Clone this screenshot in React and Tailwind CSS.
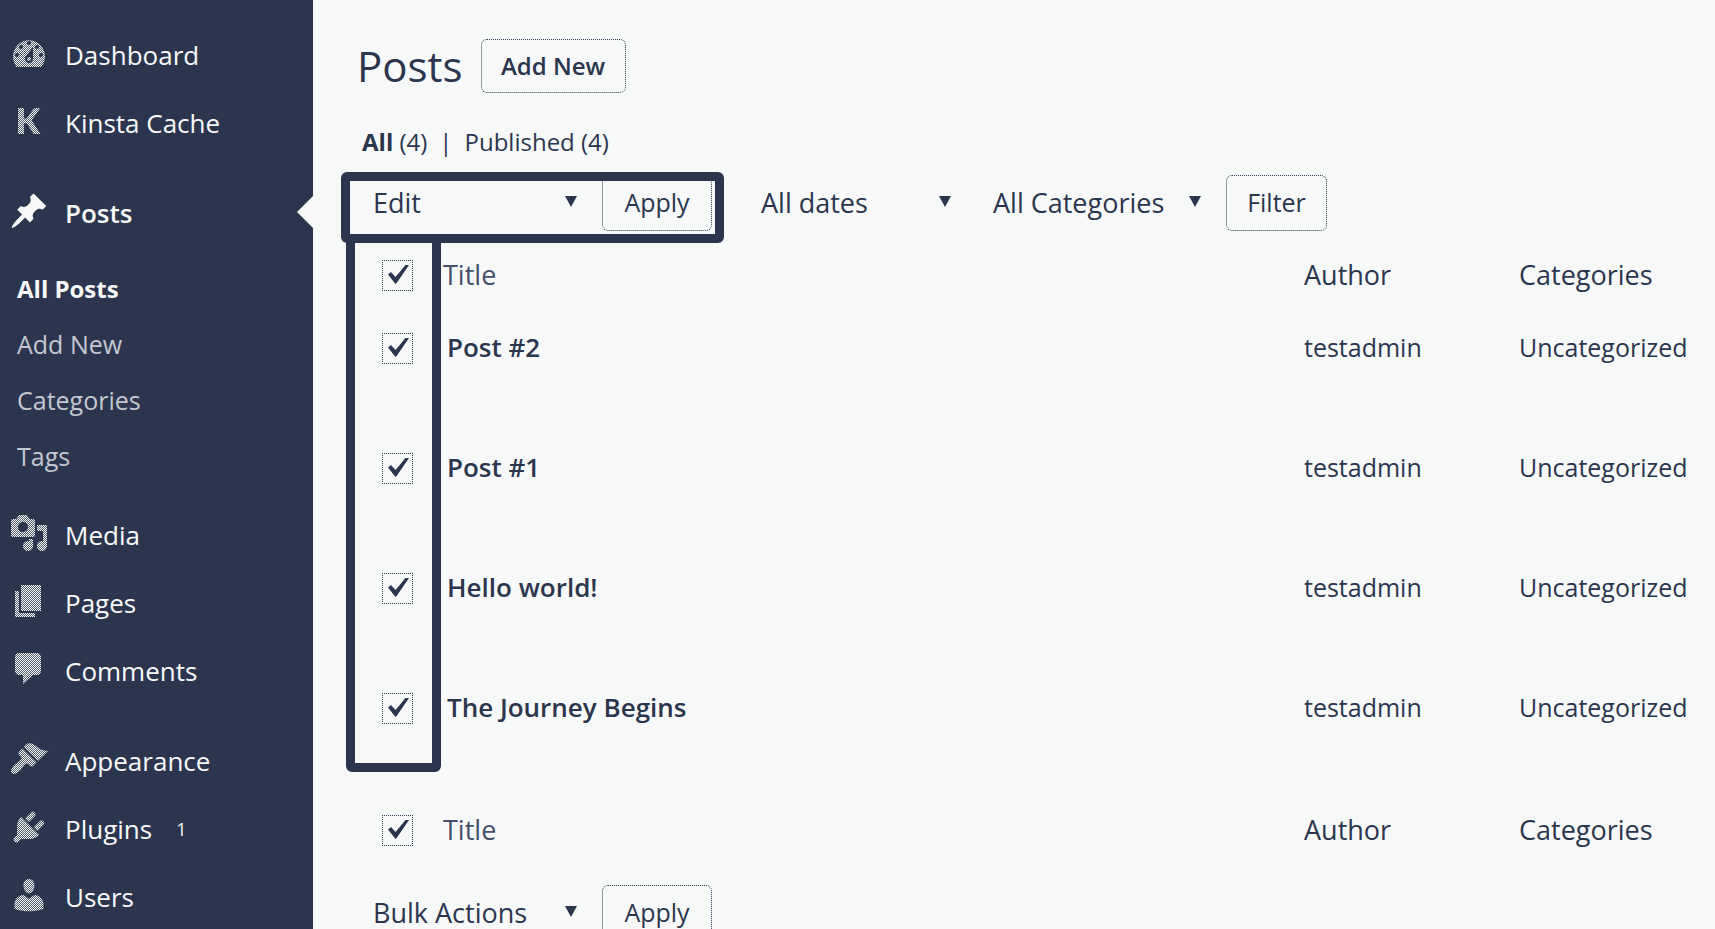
import React from "react";

const icons = {
  dashboard:
    "M3.76 17h12.48c1.11-1.45 1.76-3.25 1.76-5.21 0-4.49-3.58-8.13-8-8.13s-8 3.64-8 8.13c0 1.96.65 3.76 1.76 5.21zM10 4c.55 0 1 .45 1 1s-.45 1-1 1-1-.45-1-1 .45-1 1-1zM6 6c.55 0 1 .45 1 1s-.45 1-1 1-1-.45-1-1 .45-1 1-1zm8 0c.55 0 1 .45 1 1s-.45 1-1 1-1-.45-1-1 .45-1 1-1zm-5.37 5.55L12 7v6c0 1.1-.9 2-2 2s-2-.9-2-2c0-.57.24-1.08.63-1.45zM4 10c.55 0 1 .45 1 1s-.45 1-1 1-1-.45-1-1 .45-1 1-1zm12 0c.55 0 1 .45 1 1s-.45 1-1 1-1-.45-1-1 .45-1 1-1zm-5 3c0-.55-.45-1-1-1s-1 .45-1 1 .45 1 1 1 1-.45 1-1z",
  kinsta: "M4.5 3.5h3v5.3h1.300L12 4.300q.6-.8 1.500-.8h2.200L11.300 9.600l4.400 6.900h-3.400L9 11.200H7.500v5.300h-3z",
  posts:
    "M10.44 3.02l1.82-1.82 6.36 6.35-1.83 1.82c-1.05-.68-2.48-.57-3.41.36l-.75.75c-.92.93-1.04 2.35-.35 3.41l-1.83 1.82-2.41-2.41-2.8 2.79c-.42.42-3.38 2.71-3.8 2.29s1.86-3.39 2.28-3.81l2.79-2.79L4.1 9.36l1.83-1.82c1.05.69 2.48.57 3.4-.36l.75-.75c.93-.92 1.05-2.35.36-3.41z",
  media:
    "M13 11V4c0-.55-.45-1-1-1h-1.67L9 1H5L3.67 3H2c-.55 0-1 .45-1 1v7c0 .55.45 1 1 1h10c.55 0 1-.45 1-1zM7 4.5c1.38 0 2.5 1.12 2.5 2.5S8.38 9.5 7 9.5 4.5 8.38 4.5 7 5.62 4.5 7 4.5zM14 6h5v10.5c0 1.38-1.12 2.5-2.5 2.5S14 17.88 14 16.5s1.12-2.5 2.5-2.5c.17 0 .34.02.5.05V9h-3V6zm-4 8.05V13h2v3.5c0 1.38-1.12 2.5-2.5 2.5S7 17.88 7 16.5 8.12 14 9.5 14c.17 0 .34.02.5.05z",
  pages: "M6 15V2h10v13H6zm-1 1h8v2H3V5h2v11z",
  comments: "M5 2h9c1.1 0 2 .9 2 2v7c0 1.1-.9 2-2 2h-2l-5 4.500v-4.500H5c-1.1 0-2-.9-2-2V4c0-1.1.9-2 2-2z",
  appearance:
    "M14.48 11.06L7.41 3.99l1.5-1.5c.5-.56 2.3-.47 3.51.32 1.21.8 1.43 1.28 2.91 2.1 1.18.64 2.45 1.26 4.45.85zm-.71.71L6.7 4.7 4.93 6.47c-.39.39-.39 1.02 0 1.41l1.06 1.06c.39.39.39 1.03 0 1.42-.6.6-1.43 1.11-2.21 1.69-.35.26-.7.53-1.01.84C1.43 14.23.4 16.08 1.4 17.07c.99 1 2.84-.03 4.18-1.36.31-.31.58-.66.85-1.02.57-.78 1.08-1.61 1.69-2.21.39-.39 1.02-.39 1.41 0l1.06 1.06c.39.39 1.02.39 1.41 0z",
  plugins:
    "M13.11 4.36L9.87 7.6 8 5.73l3.24-3.24c.35-.34 1.05-.2 1.56.32.52.51.66 1.21.31 1.55zm-8 1.77l.91-1.12 9.01 9.01-1.19.84c-.71.71-2.63 1.16-3.82 1.16H6.14L4.9 17.26c-.59.59-1.54.59-2.12 0-.59-.58-.59-1.53 0-2.12l1.24-1.24v-3.88c0-1.13.4-3.19 1.09-3.89zm7.26 3.97l3.24-3.24c.34-.35 1.04-.21 1.55.31.52.51.66 1.21.31 1.55l-3.24 3.25z",
  users:
    "M10 9.25c-2.27 0-2.73-3.44-2.73-3.44C7 4.02 7.82 2 9.97 2c2.16 0 2.98 2.02 2.71 3.81 0 0-.41 3.44-2.68 3.44zm0 2.57L12.72 10c2.39 0 4.52 2.33 4.52 4.53v2.49s-3.65 1.13-7.24 1.13c-3.65 0-7.24-1.13-7.24-1.13v-2.49c0-2.25 1.94-4.48 4.47-4.48z",
};

const topItems = [
  { icon: "dashboard", label: "Dashboard" },
  { icon: "kinsta", label: "Kinsta Cache" },
];
const contentItems = [
  { icon: "media", label: "Media" },
  { icon: "pages", label: "Pages" },
  { icon: "comments", label: "Comments" },
];
const adminItems = [
  { icon: "appearance", label: "Appearance" },
  { icon: "plugins", label: "Plugins", count: 1 },
  { icon: "users", label: "Users" },
];
const posts = ["Post #2", "Post #1", "Hello world!", "The Journey Begins"];

function MenuIcon({ name, solid }) {
  const id = `weave-${name}`;
  return (
    <svg viewBox="0 0 20 20" className="-mt-1 size-10 shrink-0" aria-hidden="true">
      <defs>
        <pattern id={id} width="1" height="1" patternUnits="userSpaceOnUse">
          <rect width="1" height="1" fill="#f7f9f9" fillOpacity="0.2" />
          <path d="M0 0h.5v.5H0zM.5 .5h.5v.5H.5z" fill="#f7f9f9" shapeRendering="crispEdges" />
        </pattern>
      </defs>
      <path d={icons[name]} fillRule="evenodd" fill={solid ? "#f7f9f9" : `url(#${id})`} />
    </svg>
  );
}

function MenuItem({ icon, label, count, current }) {
  return (
    <li>
      <a href="#" className="relative flex h-17 items-center gap-4 pl-[9px] text-[26px]">
        <MenuIcon name={icon} solid={current} />
        <span className={current ? "font-semibold" : ""}>{label}</span>
        {count && <span className="ml-2 text-lg">{count}</span>}
        {current && (
          <svg viewBox="0 0 16 32" className="absolute right-0 top-[17px] h-8 w-4" aria-hidden="true">
            <path d="M16 0v32L0 16z" fill="#f7f9f9" />
          </svg>
        )}
      </a>
    </li>
  );
}

function Sidebar() {
  const sub = ["All Posts", "Add New", "Categories", "Tags"];
  return (
    <nav aria-label="Main menu" className="w-[313px] shrink-0 bg-[#2b364e] pt-[21px] text-[#f7f9f9]">
      <ul>{topItems.map((i) => <MenuItem key={i.label} {...i} />)}</ul>
      <ul className="mt-[22px]">
        <MenuItem icon="posts" label="Posts" current />
        <li>
          <ul className="pb-4 pt-[14px]">
            {sub.map((s, i) => (
              <li key={s}>
                <a
                  href="#"
                  className={
                    "flex h-14 items-center pl-[17px] " +
                    (i === 0 ? "text-2xl font-bold" : "text-[25px] text-[#c3c8d0]")
                  }
                >
                  {s}
                </a>
              </li>
            ))}
          </ul>
        </li>
        {contentItems.map((i) => <MenuItem key={i.label} {...i} />)}
      </ul>
      <ul className="mt-[22px]">{adminItems.map((i) => <MenuItem key={i.label} {...i} />)}</ul>
    </nav>
  );
}

function Select({ label, options, className }) {
  return (
    <div className={"relative " + className}>
      <select aria-label={label} className="h-14 w-full appearance-none bg-transparent text-[27px] outline-none">
        {options.map((o) => <option key={o}>{o}</option>)}
      </select>
      <svg viewBox="0 0 12 11" className="pointer-events-none absolute right-0 top-[21px] h-[11px] w-3" aria-hidden="true">
        <path d="M0 0h12L6 11z" fill="currentColor" />
      </svg>
    </div>
  );
}

function Button({ children, className = "" }) {
  return (
    <button
      type="button"
      className={"rounded-md border border-dotted border-[#2b364e] " + className}
    >
      {children}
    </button>
  );
}

function Check({ label }) {
  return (
    <label className="relative ml-[41px] block size-[31px]">
      <input
        type="checkbox"
        defaultChecked
        aria-label={label}
        className="peer block size-[31px] appearance-none border border-dotted border-[#2b364e]"
      />
      <svg
        viewBox="0 0 31 31"
        className="pointer-events-none absolute inset-0 hidden size-[31px] peer-checked:block"
        aria-hidden="true"
      >
        <path d="M6 14.500L9 12l4.500 5L23.500 5H27L15 22.500 13.500 24z" fill="currentColor" />
      </svg>
    </label>
  );
}

function HeadCells({ where }) {
  return (
    <>
      <td><Check label={`Select all (${where})`} /></td>
      <th scope="col" className="font-normal"><a href="#" className="text-[#46506a]">Title</a></th>
      <th scope="col" className="font-normal">Author</th>
      <th scope="col" className="font-normal">Categories</th>
    </>
  );
}

function PostsTable() {
  return (
    <div className="relative mt-2">
      <table className="w-full table-fixed text-left text-[27px]">
        <colgroup>
          <col className="w-[102px]" />
          <col />
          <col className="w-[215px]" />
          <col className="w-[196px]" />
        </colgroup>
        <thead>
          <tr className="h-18"><HeadCells where="top" /></tr>
        </thead>
        <tbody>
          {posts.map((p) => (
            <tr key={p} className="h-30 align-top">
              <td className="pt-[22px]"><Check label={`Select ${p}`} /></td>
              <td className="pl-1 pt-4 text-[26px] leading-10"><a href="#" className="font-semibold">{p}</a></td>
              <td className="pt-4 text-[25px] leading-10"><a href="#">testadmin</a></td>
              <td className="pt-4 text-[25px] leading-10"><a href="#">Uncategorized</a></td>
            </tr>
          ))}
        </tbody>
        <tfoot>
          <tr className="h-[78px]"><HeadCells where="bottom" /></tr>
        </tfoot>
      </table>
      <div className="pointer-events-none absolute -top-[5px] bottom-[97px] left-[5px] w-[95px] rounded-md border-[9px] border-[#2b364e]" />
    </div>
  );
}

export default function App() {
  return (
    <div className="flex h-screen overflow-hidden bg-[#f7f9f9] font-['Open_Sans','Noto_Sans',sans-serif] text-[#2b364e]">
      <Sidebar />
      <main className="min-w-0 flex-1 pl-7 pt-[38px]">
        <div className="flex h-14 items-center gap-[18px] pl-4">
          <h1 className="text-[42px] leading-14">Posts</h1>
          <Button className="h-[54px] w-[145px] text-2xl font-semibold">Add New</Button>
        </div>
        <div className="mt-7 flex h-10 items-center gap-3 pl-[21px] text-2xl">
          <a href="#"><b>All</b> (4)</a>
          <span>|</span>
          <a href="#">Published (4)</a>
        </div>
        <div className="mt-[13px] flex items-center">
          <div className="relative flex gap-[25px] pl-8 pr-3">
            <Select label="Bulk action" options={["Edit", "Bulk Actions"]} className="w-[204px]" />
            <Button className="h-14 w-[110px] text-[25px]">Apply</Button>
            <div className="pointer-events-none absolute inset-x-0 -bottom-3 -top-[3px] rounded-md border-[9px] border-[#2b364e]" />
          </div>
          <Select label="Date" options={["All dates"]} className="ml-[37px] w-[190px]" />
          <Select label="Category" options={["All Categories"]} className="ml-[42px] w-[208px]" />
          <Button className="ml-[25px] h-14 w-[101px] text-[25px]">Filter</Button>
        </div>
        <PostsTable />
        <div className="mt-4 flex gap-[25px] pl-8">
          <Select label="Bulk action (bottom)" options={["Bulk Actions", "Edit"]} className="w-[204px]" />
          <Button className="h-14 w-[110px] text-[25px]">Apply</Button>
        </div>
      </main>
    </div>
  );
}
